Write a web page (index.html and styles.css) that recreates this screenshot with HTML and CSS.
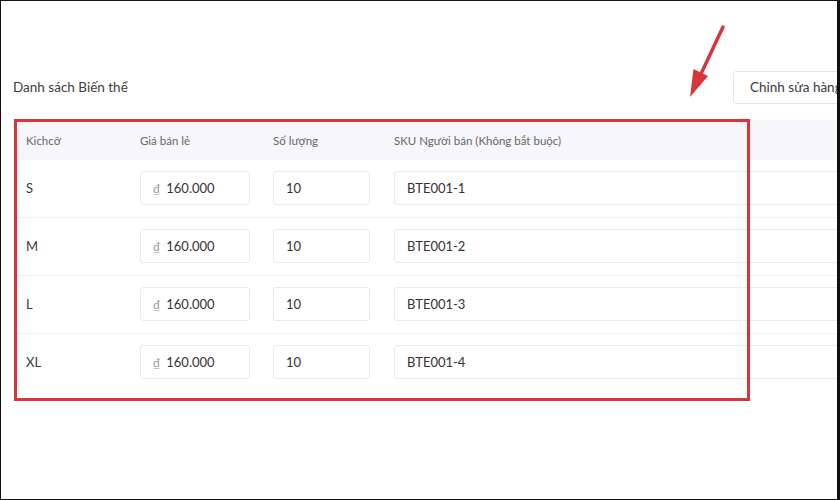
FILE: index.html
```html
<!DOCTYPE html>
<html lang="vi">
<head>
<meta charset="utf-8">
<link rel="stylesheet" href="styles.css">
</head>
<body>
<div class="frame">
  <div class="toolbar">
    <div class="title">Danh sách Biến thể</div>
    <button class="edit-btn">Chỉnh sửa hàng loạt</button>
  </div>
  <div class="table">
    <div class="row head">
      <div class="cell label">Kichcỡ</div>
      <div class="cell">Giá bán lẻ</div>
      <div class="cell">Số lượng</div>
      <div class="cell">SKU Người bán (Không bắt buộc)</div>
    </div>
    <div class="row">
      <div class="cell label">S</div>
      <div class="input price"><span class="cur">₫</span>160.000</div>
      <div class="input">10</div>
      <div class="input">BTE001-1</div>
    </div>
    <div class="row">
      <div class="cell label">M</div>
      <div class="input price"><span class="cur">₫</span>160.000</div>
      <div class="input">10</div>
      <div class="input">BTE001-2</div>
    </div>
    <div class="row">
      <div class="cell label">L</div>
      <div class="input price"><span class="cur">₫</span>160.000</div>
      <div class="input">10</div>
      <div class="input">BTE001-3</div>
    </div>
    <div class="row last">
      <div class="cell label">XL</div>
      <div class="input price"><span class="cur">₫</span>160.000</div>
      <div class="input">10</div>
      <div class="input">BTE001-4</div>
    </div>
  </div>
  <div class="highlight"></div>
  <svg class="arrow" width="840" height="120" viewBox="0 0 840 120">
    <line x1="723" y1="27" x2="700" y2="76" stroke="#d8343a" stroke-width="3.5" stroke-linecap="round"/>
    <polygon points="690,97 708,76 693.5,69" fill="#d8343a"/>
  </svg>
</div>
</body>
</html>
```
FILE: styles.css
```css
html, body {
  margin: 0;
  padding: 0;
  background: #fff;
}
body {
  width: 840px;
  height: 500px;
  overflow: hidden;
  font-family: Lato, "Open Sans", sans-serif;
  color: #3a3a3a;
}
.frame {
  position: relative;
  box-sizing: border-box;
  width: 840px;
  height: 500px;
  border: 1px solid #111;
  border-right-width: 3px;
  overflow: hidden;
}
.toolbar {
  display: flex;
  align-items: center;
  width: 880px;
  padding: 70px 0 0 12px;
  box-sizing: border-box;
  height: 104px;
}
.title {
  font-size: 13.5px;
  color: #3c3c3c;
  margin-top: -2px;
}
.edit-btn {
  margin-left: auto;
  margin-right: 28px;
  width: 120px;
  height: 33px;
  margin-top: -2px;
  background: #fff;
  border: 1px solid #e6e6ea;
  border-radius: 3px;
  font-family: Lato, "Open Sans", sans-serif;
  font-size: 13.5px;
  color: #3c3c3c;
  text-align: left;
  padding: 0 0 0 16px;
  white-space: nowrap;
  overflow: hidden;
}
.table {
  margin: 15px 0 0 15px;
  width: 880px;
}
.row {
  display: grid;
  grid-template-columns: 101px 110px 98px 470px;
  column-gap: 23px;
  align-items: center;
  box-sizing: border-box;
  padding: 11px 0 12px;
  border-bottom: 1px solid #f0f0f3;
}
.row > :nth-child(3) {
  margin-right: 1px;
}
.row.head {
  height: 40px;
  padding: 0;
  background: #f6f6fb;
  border-bottom: none;
  font-size: 11.5px;
  color: #666;
}
.row.last {
  border-bottom: none;
}
.label {
  padding-left: 10px;
}
.row:not(.head) .label {
  font-size: 13px;
  color: #3a3a3a;
}
.input {
  height: 34px;
  box-sizing: border-box;
  border: 1px solid #e9e9ee;
  border-radius: 3px;
  display: flex;
  align-items: center;
  padding-left: 12px;
  font-size: 13px;
  color: #333;
  background: #fff;
}
.price .cur {
  color: #9a9a9a;
  margin-right: 6px;
  font-size: 12px;
}
.highlight {
  position: absolute;
  left: 13px;
  top: 118px;
  width: 730px;
  height: 276px;
  border: 3px solid #d8343a;
  pointer-events: none;
}
.arrow {
  position: absolute;
  left: -1px;
  top: -1px;
  pointer-events: none;
}
```
